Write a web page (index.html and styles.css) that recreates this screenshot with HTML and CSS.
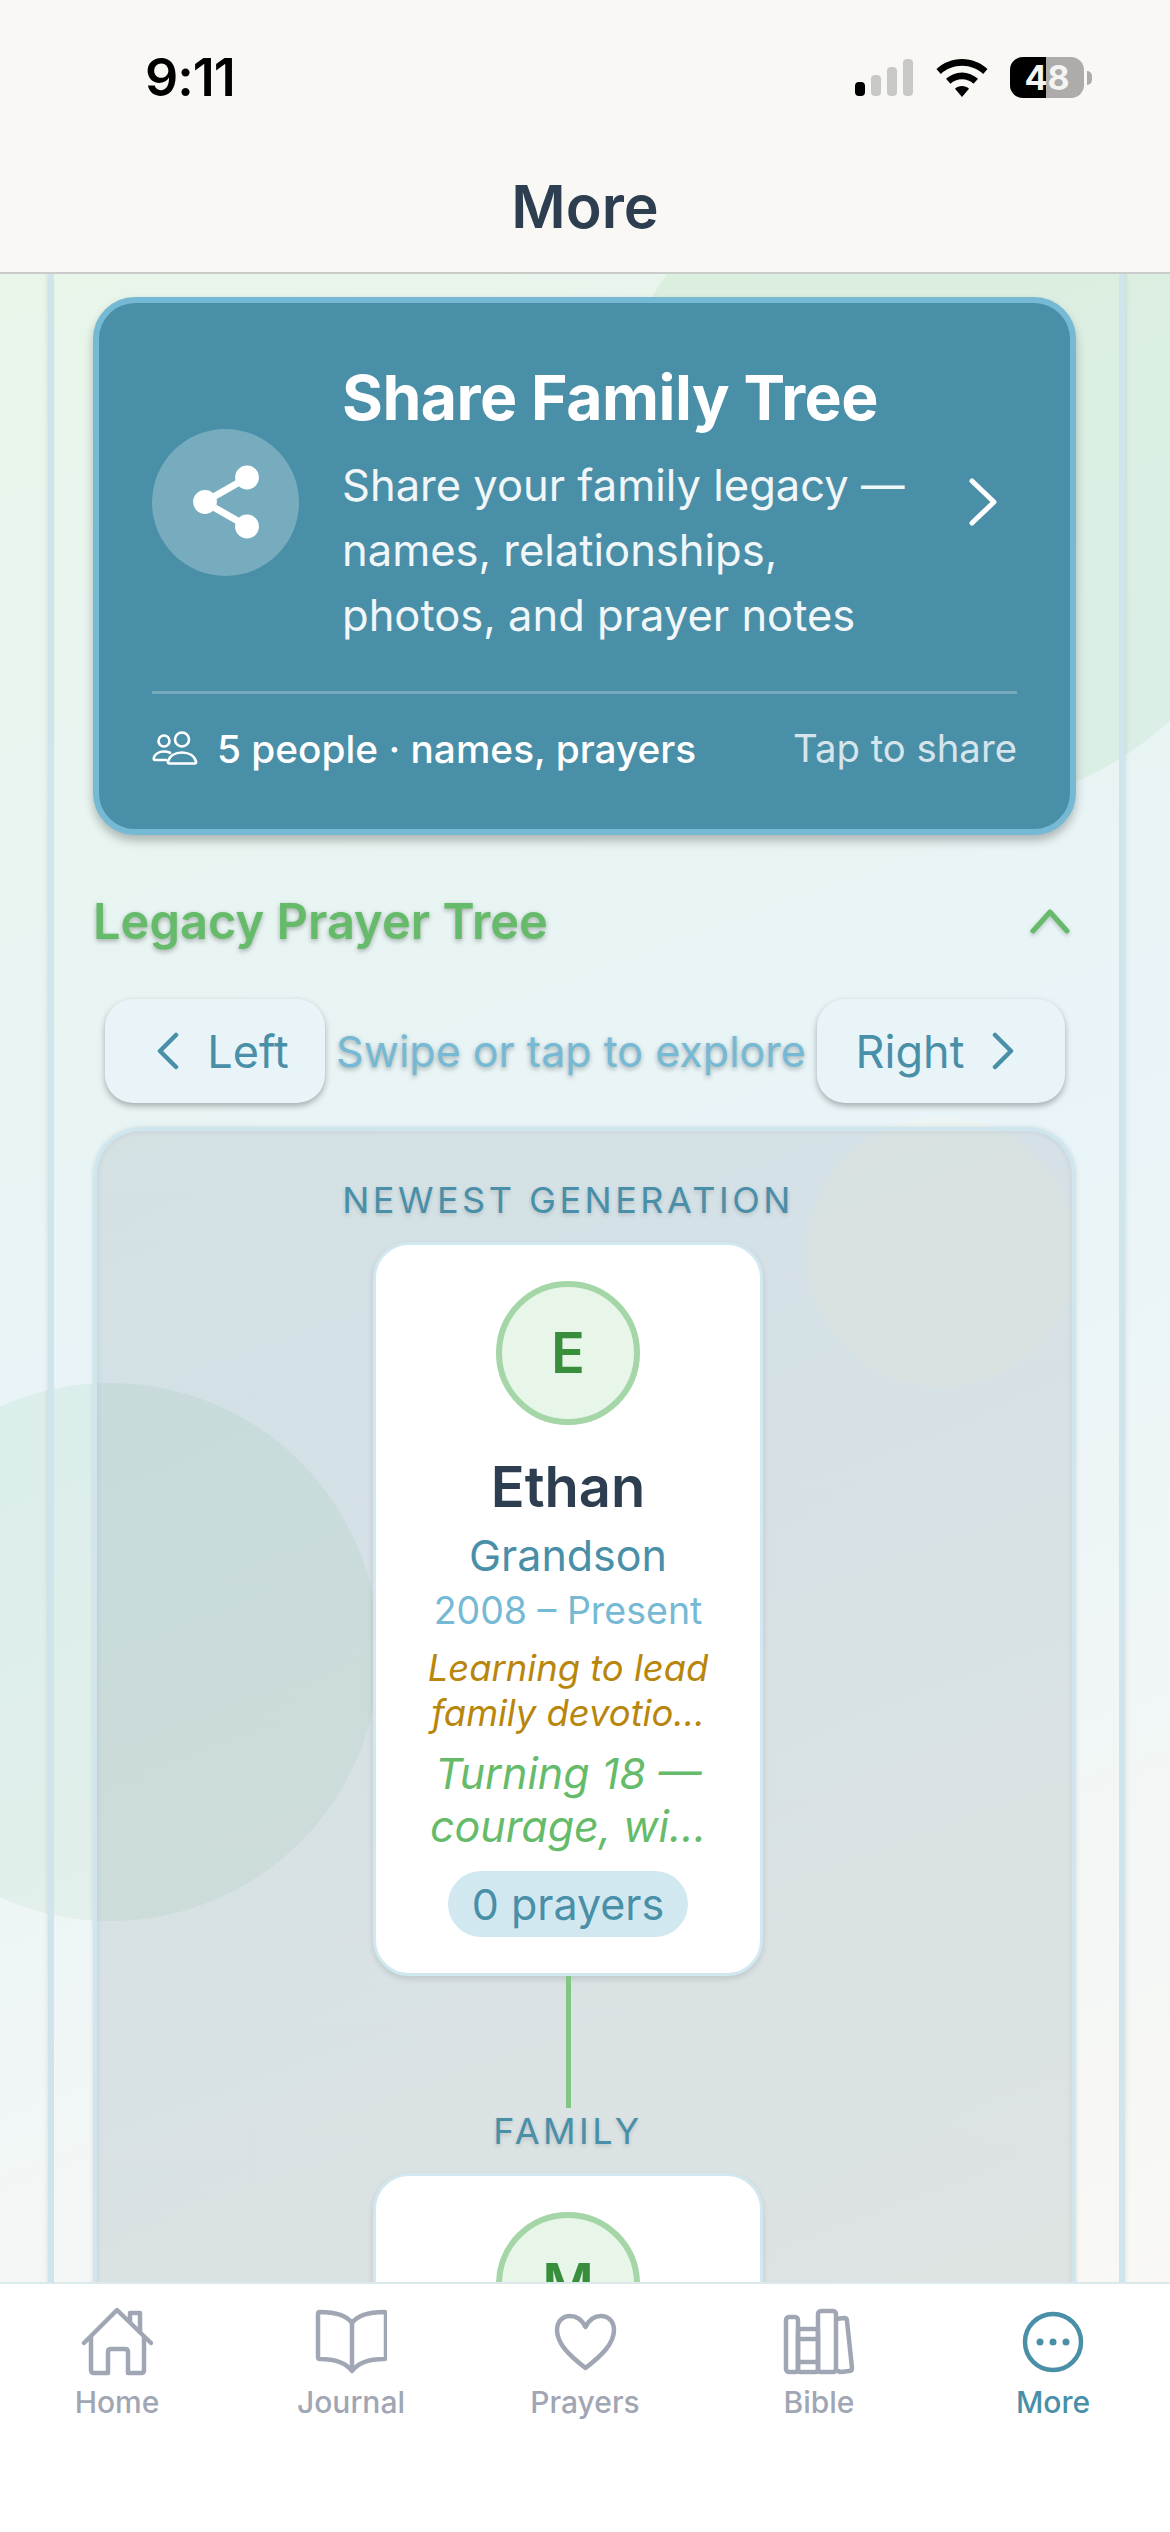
FILE: index.html
```html
<!DOCTYPE html>
<html lang="en">
<head>
    <meta charset="UTF-8">
    <meta name="viewport" content="width=device-width, initial-scale=1.0">
    <title>More</title>
    <link rel="stylesheet" href="styles.css">
</head>
<body>
    <header class="top">
        <div class="status">
            <span class="time">9:11</span>
            <div class="status-icons">
                <svg class="signal" width="58" height="37" viewBox="0 0 58 37">
                    <rect x="0" y="23" width="10" height="14" rx="4" fill="#000"/>
                    <rect x="16" y="16" width="10" height="21" rx="4" fill="#c8c8c6"/>
                    <rect x="32" y="8" width="10" height="29" rx="4" fill="#c8c8c6"/>
                    <rect x="48" y="0" width="10" height="37" rx="4" fill="#c8c8c6"/>
                </svg>
                <svg class="wifi" width="52" height="38" viewBox="0 0 52 38">
                    <path d="M26 0C16 0 7.500 3.700 0.500 10L4.800 15C10.500 9.800 18 6.800 26 6.800S41.500 9.800 47.200 15L51.500 10C44.500 3.700 36 0 26 0Z"/>
                    <path d="M26 13.500C20 13.500 14.500 15.800 10 19.800L14.500 24.800C17.500 22 21.500 20.300 26 20.300S34.500 22 37.500 24.800L42 19.800C37.500 15.800 32 13.500 26 13.500Z"/>
                    <path d="M26 27C23.300 27 20.800 28 19 29.800L26 38L33 29.800C31.200 28 28.700 27 26 27Z"/>
                </svg>
                <div class="battery"><span class="battery-fill"></span><span class="battery-num">48</span></div>
                <span class="battery-tip"></span>
            </div>
        </div>
        <h1 class="page-title">More</h1>
    </header>

    <main class="scroll">
        <span class="blob blob-top"></span>
        <span class="blob blob-left"></span>
        <span class="blob blob-gold"></span>

        <div class="panel">
            <section class="share-card">
                <div class="share-main">
                    <div class="share-icon">
                        <svg width="84" height="84" viewBox="0 0 24 24" fill="#fff" stroke="#fff" stroke-width="2" stroke-linecap="round">
                            <circle cx="18" cy="5" r="2.400"/><circle cx="6" cy="12" r="2.400"/><circle cx="18" cy="19" r="2.400"/>
                            <line x1="8.500" y1="13.500" x2="15.500" y2="17.500"/><line x1="15.500" y1="6.500" x2="8.500" y2="10.500"/>
                        </svg>
                    </div>
                    <div class="share-text">
                        <h2>Share Family Tree</h2>
                        <p>Share your family legacy — names, relationships, photos, and prayer notes</p>
                    </div>
                    <svg class="share-arrow" width="30" height="50" viewBox="0 0 30 50" fill="none" stroke="#fff" stroke-width="5" stroke-linecap="round" stroke-linejoin="round">
                        <path d="M4 4L26 25L4 46"/>
                    </svg>
                </div>
                <div class="share-foot">
                    <div class="share-count">
                        <svg width="46" height="34" viewBox="0 0 46 34" fill="none" stroke="#fff" stroke-width="2.600" stroke-linejoin="round" stroke-linecap="round">
                            <circle cx="12" cy="10" r="5.500"/><circle cx="30" cy="8.500" r="7"/>
                            <path d="M14 29H3Q1.500 29 1.800 27C2.800 23 7 20.500 12 20.500C14 20.500 16 20.900 18 21.800"/>
                            <path d="M17.500 32.500Q15.500 32.500 16 30.500C17.500 25 23 21.500 30 21.500C37 21.500 42.500 25 44 30.500Q44.500 32.500 42.500 32.500Z"/>
                        </svg>
                        <span>5 people · names, prayers</span>
                    </div>
                    <span class="share-tap">Tap to share</span>
                </div>
            </section>

            <div class="tree-head">
                <h2>Legacy Prayer Tree</h2>
                <svg width="40" height="26" viewBox="0 0 40 26" fill="none" stroke="#66bb6a" stroke-width="5" stroke-linecap="round" stroke-linejoin="round">
                    <path d="M3 23L20 4L37 23"/>
                </svg>
            </div>

            <div class="tree-nav">
                <button class="nav-btn nav-left">
                    <svg width="22" height="38" viewBox="0 0 22 38" fill="none" stroke="#4a8fa8" stroke-width="4.500" stroke-linecap="round" stroke-linejoin="round"><path d="M19 3L3 19L19 35"/></svg>
                    Left
                </button>
                <span class="nav-hint">Swipe or tap to explore</span>
                <button class="nav-btn nav-right">
                    Right
                    <svg width="22" height="38" viewBox="0 0 22 38" fill="none" stroke="#4a8fa8" stroke-width="4.500" stroke-linecap="round" stroke-linejoin="round"><path d="M3 3L19 19L3 35"/></svg>
                </button>
            </div>

            <section class="tree">
                <div class="tree-col">
                    <div class="gen-label">NEWEST GENERATION</div>
                    <article class="person">
                        <div class="avatar">E</div>
                        <div class="person-name">Ethan</div>
                        <div class="person-role">Grandson</div>
                        <div class="person-years">2008 – Present</div>
                        <div class="person-note">Learning to lead<br>family devotio...</div>
                        <div class="person-prayer">Turning 18 —<br>courage, wi...</div>
                        <div class="person-pill">0 prayers</div>
                    </article>
                    <div class="link"></div>
                    <div class="gen-label gen-family">FAMILY</div>
                    <article class="person">
                        <div class="avatar">M</div>
                    </article>
                </div>
            </section>
        </div>
    </main>

    <nav class="tabs">
        <div class="tab">
            <svg width="72" height="68" viewBox="0 0 72 68" fill="none" stroke="#a0a6b3" stroke-width="4.500" stroke-linecap="round" stroke-linejoin="round">
                <path d="M3 35L36 2L70 35"/>
                <path d="M49 14V5H59V24"/>
                <path d="M10 29V62Q10 65 13 65H27V44Q27 41 30 41H44Q47 41 47 44V65H60Q63 65 63 62V29"/>
            </svg>
            <span>Home</span>
        </div>
        <div class="tab">
            <svg width="72" height="68" viewBox="0 0 72 68" fill="none" stroke="#a0a6b3" stroke-width="4.500" stroke-linejoin="round" stroke-linecap="round">
                <path d="M37 15C32 8 22 4 5 4Q3 4 3 6V49Q3 51 5 51C20 51 31 55 37 63C43 55 54 51 69 51Q71 51 71 49V6Q71 4 69 4C52 4 42 8 37 15Z"/>
                <path d="M37 15V62"/>
            </svg>
            <span>Journal</span>
        </div>
        <div class="tab">
            <svg width="72" height="68" viewBox="0 0 72 68" fill="none" stroke="#a0a6b3" stroke-width="4.500" stroke-linejoin="round">
                <path d="M36.500 60C21 48 8 36 8 22C8 13 14 8 21 8C28 8 33 12 36.500 19C40 12 45 8 52 8C59 8 65 13 65 22C65 36 52 48 36.500 60Z"/>
            </svg>
            <span>Prayers</span>
        </div>
        <div class="tab">
            <svg width="72" height="68" viewBox="0 0 72 68" fill="none" stroke="#a0a6b3" stroke-width="4.500" stroke-linejoin="round">
                <rect x="3" y="9" width="12" height="55" rx="3"/>
                <rect x="15" y="21" width="20" height="43" rx="2"/>
                <path d="M15 31H35M15 54H35"/>
                <rect x="35" y="3" width="18" height="61" rx="3"/>
                <path d="M53 11L61 10Q64 10 64 13L69 60Q69 63 66 63L58 64Q55 64 55 61"/>
            </svg>
            <span>Bible</span>
        </div>
        <div class="tab tab-active">
            <svg width="72" height="68" viewBox="0 0 72 68" fill="none" stroke="#4a8fa8" stroke-width="4.500">
                <circle cx="36" cy="34" r="28"/>
                <circle cx="23" cy="34" r="3.500" fill="#4a8fa8" stroke="none"/>
                <circle cx="36" cy="34" r="3.500" fill="#4a8fa8" stroke="none"/>
                <circle cx="49" cy="34" r="3.500" fill="#4a8fa8" stroke="none"/>
            </svg>
            <span>More</span>
        </div>
    </nav>
</body>
</html>
```

FILE: styles.css
```css
*{
    padding: 0;
    margin: 0;
    box-sizing: border-box;
}

body{
    width: 1170px;
    height: 2532px;
    display: flex;
    flex-direction: column;
    overflow: hidden;
    font-family: "Inter", "Noto Sans", sans-serif;
    background-color: #fff;
}

/* header */
.top{
    height: 274px;
    flex-shrink: 0;
    background-color: #f9f8f4;
    border-bottom: 2px solid #c9ccc9;
    position: relative;
    z-index: 2;
}

.status{
    height: 156px;
    padding: 46px 78px 0 145px;
    display: flex;
    justify-content: space-between;
}

.time{
    font-size: 52px;
    font-weight: 600;
    line-height: 64px;
    color: #000;
    letter-spacing: -1px;
}

.status-icons{
    display: flex;
    align-items: flex-start;
    padding-top: 11px;
}

.signal{
    margin-top: 2px;
}

.wifi{
    margin-left: 23px;
    margin-top: 2px;
    fill: #000;
}

.battery{
    width: 74px;
    height: 41px;
    margin-left: 22px;
    border-radius: 13px;
    overflow: hidden;
    background-color: #adacaa;
    position: relative;
    text-align: center;
}

.battery-fill{
    position: absolute;
    left: 0;
    top: 0;
    bottom: 0;
    width: 36px;
    background-color: #000;
}

.battery-num{
    position: relative;
    font-size: 34px;
    line-height: 41px;
    font-weight: 700;
    color: #f4f4f2;
}

.battery-tip{
    width: 5px;
    height: 14px;
    margin: 14px 0 0 3px;
    border-radius: 0 6px 6px 0;
    background-color: #adacaa;
}

.page-title{
    text-align: center;
    font-size: 59px;
    font-weight: 600;
    line-height: 72px;
    color: #2c3e50;
    margin-top: 15px;
}

/* scroll area */
.scroll{
    flex: 1;
    position: relative;
    overflow: hidden;
    background: linear-gradient(160deg, #e8f5e9 0%, #e8f4f8 50%, #f9f8f4 100%);
}

.blob{
    position: absolute;
    border-radius: 50%;
}

.blob-top{
    left: 603px;
    top: -140px;
    width: 676px;
    height: 676px;
    background-color: rgba(76, 175, 80, 0.08);
}

.blob-left{
    left: -159px;
    top: 1109px;
    width: 538px;
    height: 538px;
    background-color: rgba(76, 175, 80, 0.07);
}

.blob-gold{
    left: 806px;
    top: 843px;
    width: 270px;
    height: 270px;
    background-color: rgba(250, 248, 232, 0.3);
}

.panel{
    position: relative;
    width: 1077px;
    margin: -40px 0 0 48px;
    height: 2400px;
    padding: 63px 43px 0 39px;
    border: solid #d0e4ec;
    border-width: 0 6px;
    box-shadow: 0 0 5px rgba(0, 0, 0, 0.12);
}

/* share card */
.share-card{
    height: 538px;
    background-color: #4a8fa8;
    border: 6px solid #76b9d4;
    border-radius: 42px;
    padding: 0 53px;
    box-shadow: 0 6px 10px rgba(0, 0, 0, 0.25);
}

.share-main{
    height: 391px;
    display: flex;
    align-items: center;
    border-bottom: 3px solid #76a9bc;
}

.share-icon{
    width: 147px;
    height: 147px;
    flex-shrink: 0;
    border-radius: 50%;
    background-color: rgba(255, 255, 255, 0.25);
    display: flex;
    align-items: center;
    justify-content: center;
    margin-top: 10px;
}

.share-text{
    flex: 1;
    padding-left: 43px;
    margin-top: 14px;
    color: #fff;
}

.share-text h2{
    font-size: 62.500px;
    font-weight: 700;
    line-height: 72px;
    letter-spacing: -0.500px;
    margin-bottom: 20px;
}

.share-text p{
    font-size: 43.500px;
    line-height: 65px;
    color: #f1f6f8;
    width: 590px;
}

.share-arrow{
    margin: 10px 19px 0 0;
    flex-shrink: 0;
}

.share-foot{
    height: 110px;
    display: flex;
    align-items: center;
    justify-content: space-between;
    padding-bottom: 2px;
    color: #fff;
}

.share-count{
    display: flex;
    align-items: center;
    gap: 19px;
    font-size: 38.800px;
    font-weight: 500;
}

.share-tap{
    font-size: 38.300px;
    color: #d6e5eb;
}

/* tree heading */
.tree-head{
    height: 80px;
    margin-top: 46px;
    display: flex;
    align-items: center;
    justify-content: space-between;
    padding-right: 6px;
}

.tree-head h2{
    font-size: 48.800px;
    font-weight: 600;
    color: #66bb6a;
    text-shadow: 0 2px 5px rgba(0, 0, 0, 0.3);
}

.tree-head svg{
    filter: drop-shadow(0 2px 2px rgba(0, 0, 0, 0.2));
}

.tree-nav{
    height: 104px;
    margin-top: 38px;
    padding: 0 11px 0 12px;
    display: flex;
    align-items: stretch;
    justify-content: space-between;
}

.nav-btn{
    width: 220px;
    display: flex;
    align-items: center;
    justify-content: center;
    gap: 28px;
    font-family: inherit;
    font-size: 45px;
    color: #4a8fa8;
    background-color: #e8f4f8;
    border: 0;
    border-radius: 28px;
    box-shadow: 0 3px 6px rgba(0, 0, 0, 0.3);
}

.nav-left{
    padding-left: 16px;
}

.nav-right{
    width: 248px;
    padding-right: 12px;
}

.nav-hint{
    align-self: center;
    font-size: 43px;
    color: #76b9d4;
    white-space: nowrap;
    text-shadow: 0 2px 5px rgba(0, 0, 0, 0.3);
}

/* tree */
.tree{
    height: 1400px;
    margin-top: 24px;
    padding: 0 33px 0 0;
    background: linear-gradient(rgba(44, 62, 80, 0.105), rgba(30, 80, 100, 0.125));
    border: 4px solid #cfe6ef;
    border-radius: 48px 48px 0 0;
    border-bottom: 0;
    box-shadow: inset 0 0 6px rgba(0, 0, 0, 0.08), 0 0 4px rgba(0, 0, 0, 0.1);
}

.tree-col{
    display: flex;
    flex-direction: column;
    align-items: center;
}

.gen-label{
    margin-top: 47px;
    font-size: 36px;
    line-height: 44px;
    letter-spacing: 3.500px;
    color: #4a8fa8;
    text-shadow: 0 2px 4px rgba(0, 0, 0, 0.15);
}

.person{
    width: 390px;
    height: 734px;
    margin-top: 20px;
    background-color: #fff;
    border: 3px solid #d1e8f0;
    border-radius: 36px;
    box-shadow: 0 3px 6px rgba(0, 0, 0, 0.12);
    padding-top: 36px;
    display: flex;
    flex-direction: column;
    align-items: center;
    text-align: center;
    flex-shrink: 0;
}

.avatar{
    width: 144px;
    height: 144px;
    border-radius: 50%;
    background-color: #e8f5e9;
    border: 6px solid #a5d6a7;
    color: #388e3c;
    font-size: 56px;
    font-weight: 600;
    display: flex;
    align-items: center;
    justify-content: center;
    flex-shrink: 0;
}

.person-name{
    margin-top: 28px;
    font-size: 56px;
    line-height: 68px;
    font-weight: 600;
    color: #2c3e50;
}

.person-role{
    margin-top: 8px;
    font-size: 43px;
    line-height: 52px;
    color: #4a8fa8;
}

.person-years{
    margin-top: 8px;
    font-size: 37.500px;
    line-height: 44px;
    color: #76b9d4;
}

.person-note{
    margin-top: 13px;
    font-size: 36.400px;
    line-height: 45px;
    font-style: italic;
    color: #b8860b;
}

.person-prayer{
    margin-top: 11px;
    font-size: 43px;
    line-height: 53px;
    font-style: italic;
    color: #66bb6a;
}

.person-pill{
    margin-top: 18px;
    width: 240px;
    height: 66px;
    border-radius: 33px;
    background-color: #d1e8f0;
    font-size: 43px;
    line-height: 66px;
    color: #4a8fa8;
}

.link{
    width: 5px;
    height: 132px;
    flex-shrink: 0;
    background-color: #81c784;
}

.gen-family{
    margin-top: 1px;
}

/* tabs */
.tabs{
    height: 250px;
    flex-shrink: 0;
    background-color: #fff;
    border-top: 2px solid #dbe8ec;
    position: relative;
    z-index: 2;
    display: flex;
    padding-top: 24px;
}

.tab{
    flex: 1;
    display: flex;
    flex-direction: column;
    align-items: center;
    gap: 6px;
    font-size: 30px;
    font-weight: 500;
    line-height: 40px;
    color: #a0a6b3;
}

.tab-active{
    color: #4a8fa8;
}
```
